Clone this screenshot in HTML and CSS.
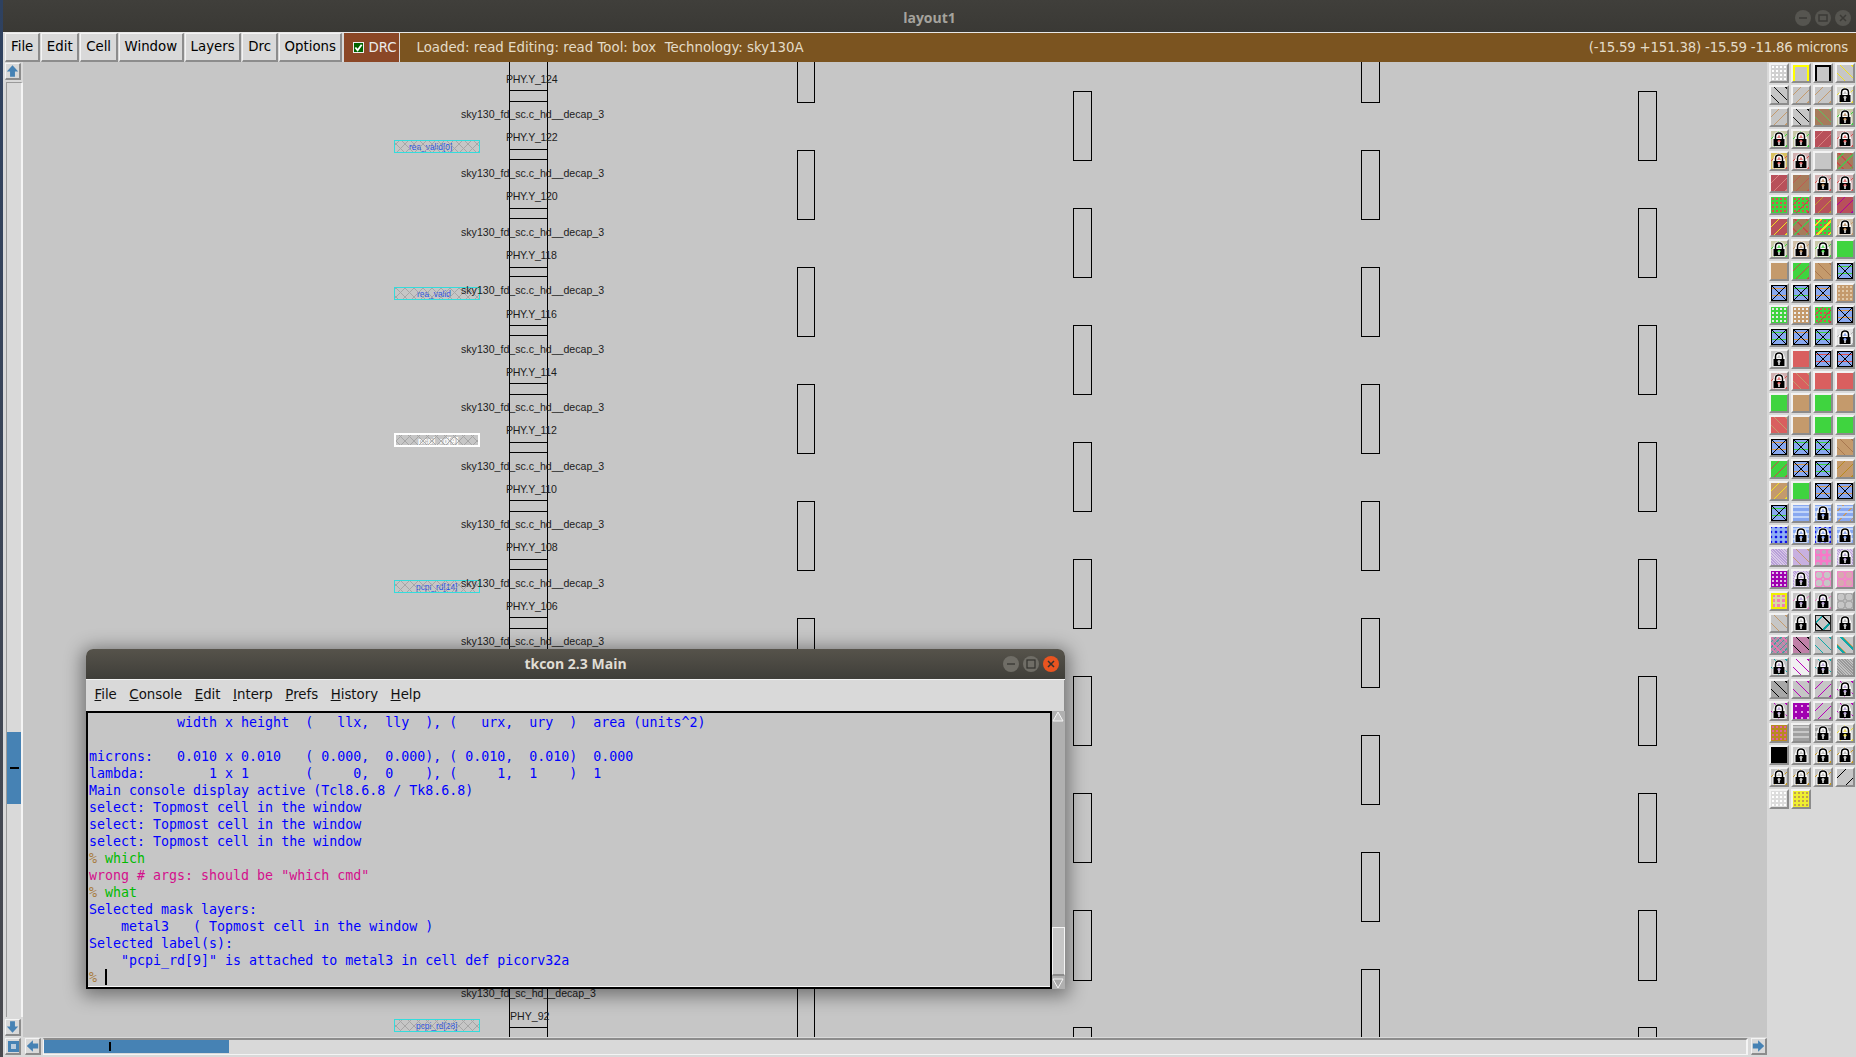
FILE: index.html
```html
<!DOCTYPE html>
<html lang="en">
<head>
<meta charset="utf-8">
<title>layout1</title>
<link rel="stylesheet" href="styles.css">
</head>
<body>
<svg class="defs" width="0" height="0" aria-hidden="true">
  <symbol id="lk" viewBox="0 0 16 16">
    <path d="M1.500 15.500V8L3 4Q4 0.500 8 0.500Q12 0.500 13 4L14.500 8V15.500Z" fill="#fff"/>
    <path d="M4.500 8V5.500Q4.500 2 8 2Q11.500 2 11.500 5.500V8" fill="none" stroke="#000" stroke-width="1.500"/>
    <path d="M6 7L8 3.500L10 7Z" fill="currentColor" opacity=".75"/>
    <rect x="2.500" y="8" width="11" height="7" fill="#000"/>
    <circle cx="8" cy="10.300" r="1.500" fill="currentColor"/>
    <rect x="7.300" y="10.500" width="1.400" height="3.500" fill="#eee"/>
  </symbol>
  <symbol id="arrow" viewBox="0 0 16 16">
    <path d="M8 1L15 8.500H11V15H5V8.500H1Z" fill="#4682b4"/>
  </symbol>
</svg>

<div class="window">
  <header class="titlebar">
    <span class="title">layout1</span>
    <div class="winbtns">
      <span class="wb"><svg viewBox="0 0 16 16"><path d="M4 8H12" stroke="#3b3a36" stroke-width="1.500"/></svg></span>
      <span class="wb"><svg viewBox="0 0 16 16"><rect x="4" y="5" width="8" height="6" fill="none" stroke="#3b3a36" stroke-width="1.500"/></svg></span>
      <span class="wb"><svg viewBox="0 0 16 16"><path d="M5 5L11 11M11 5L5 11" stroke="#3b3a36" stroke-width="1.500"/></svg></span>
    </div>
  </header>

  <nav class="toolbar">
    <span class="tbtn">File</span>
    <span class="tbtn">Edit</span>
    <span class="tbtn">Cell</span>
    <span class="tbtn">Window</span>
    <span class="tbtn">Layers</span>
    <span class="tbtn">Drc</span>
    <span class="tbtn">Options</span>
    <span class="drc"><span class="check"><svg viewBox="0 0 10 10"><path d="M1.500 5L4 8L8.500 2" fill="none" stroke="#fff" stroke-width="2"/></svg></span>DRC</span>
    <div class="status">
      <span class="status-left">Loaded: read Editing: read Tool: box&nbsp; Technology: sky130A</span>
      <span class="coords">(-15.59 +151.38) -15.59 -11.86 microns</span>
    </div>
  </nav>

  <div class="workspace">
    <div class="main">
      <div class="upper">
        <div class="vscroll">
          <span class="abtn"><svg><use href="#arrow"/></svg></span>
          <div class="vtrack">
            <div class="vthumb"><span class="vmark"></span></div>
          </div>
          <span class="abtn flip"><svg><use href="#arrow"/></svg></span>
        </div>
        <svg class="canvas" viewBox="23 62 1744 975" shape-rendering="crispEdges">
          <defs>
            <pattern id="xh" width="9" height="9" patternUnits="userSpaceOnUse">
              <path d="M0 0L9 9M9 0L0 9" stroke="#a6a6a6" stroke-width="1" fill="none" shape-rendering="auto"/>
            </pattern>
          </defs>
          <g class="cells">
            <rect x="797.500" y="33" width="17" height="69"/><rect x="797.500" y="150" width="17" height="69"/><rect x="797.500" y="267" width="17" height="69"/><rect x="797.500" y="384" width="17" height="69"/><rect x="797.500" y="501" width="17" height="69"/><rect x="797.500" y="618" width="17" height="69"/><rect x="797.500" y="969" width="17" height="69"/>
            <rect x="1073.500" y="91" width="18" height="69"/><rect x="1073.500" y="208" width="18" height="69"/><rect x="1073.500" y="325" width="18" height="69"/><rect x="1073.500" y="442" width="18" height="69"/><rect x="1073.500" y="559" width="18" height="69"/><rect x="1073.500" y="676" width="18" height="69"/><rect x="1073.500" y="793" width="18" height="69"/><rect x="1073.500" y="910" width="18" height="70"/><rect x="1073.500" y="1027" width="18" height="69"/>
            <rect x="1361.500" y="33" width="18" height="69"/><rect x="1361.500" y="150" width="18" height="69"/><rect x="1361.500" y="267" width="18" height="69"/><rect x="1361.500" y="384" width="18" height="69"/><rect x="1361.500" y="501" width="18" height="69"/><rect x="1361.500" y="618" width="18" height="69"/><rect x="1361.500" y="735" width="18" height="69"/><rect x="1361.500" y="852" width="18" height="69"/><rect x="1361.500" y="969" width="18" height="69"/>
            <rect x="1638.500" y="91" width="18" height="69"/><rect x="1638.500" y="208" width="18" height="69"/><rect x="1638.500" y="325" width="18" height="69"/><rect x="1638.500" y="442" width="18" height="69"/><rect x="1638.500" y="559" width="18" height="69"/><rect x="1638.500" y="676" width="18" height="69"/><rect x="1638.500" y="793" width="18" height="69"/><rect x="1638.500" y="910" width="18" height="70"/><rect x="1638.500" y="1027" width="18" height="69"/>
          </g>
          <path class="stack" d="M509.500 62V1037M547.500 62V1037M510 90.500H547M510 101.500H547M510 149.500H547M510 159.500H547M510 208.500H547M510 218.500H547M510 267.500H547M510 276.500H547M510 325.500H547M510 335.500H547M510 383.500H547M510 394.500H547M510 442.500H547M510 452.500H547M510 500.500H547M510 511.500H547M510 559.500H547M510 569.500H547M510 617.500H547M510 628.500H547M510 1027.500H547"/>
          <g class="pin cyan">
            <rect class="pinbox" x="394.500" y="140.500" width="85" height="12"/>
            <text x="409" y="150">rea_valid[0]</text>
            <rect class="pinhatch" x="395" y="141" width="84" height="11"/>
          </g>
          <g class="pin cyan">
            <rect class="pinbox" x="394.500" y="287.500" width="85" height="12"/>
            <text x="417" y="297">rea_valid</text>
            <rect class="pinhatch" x="395" y="288" width="84" height="11"/>
          </g>
          <g class="pin picked">
            <rect class="pinbox" x="395" y="434" width="84" height="12"/>
            <text x="418" y="444">pcpi_rd[9]</text>
            <rect class="pinhatch" x="396" y="435" width="82" height="10"/>
          </g>
          <g class="pin cyan">
            <rect class="pinbox" x="394.500" y="580.500" width="85" height="12"/>
            <text x="416" y="590">pcpi_rd[14]</text>
            <rect class="pinhatch" x="395" y="581" width="84" height="11"/>
          </g>
          <g class="pin cyan">
            <rect class="pinbox" x="394.500" y="1019.500" width="85" height="12"/>
            <text x="416" y="1029">pcpi_rd[28]</text>
            <rect class="pinhatch" x="395" y="1020" width="84" height="11"/>
          </g>
          <g class="cell-labels">
            <text class="phy" x="506" y="83">PHY.Y_124</text>
            <text x="461" y="118">sky130_fd_sc.c_hd__decap_3</text>
            <text class="phy" x="506" y="141">PHY.Y_122</text>
            <text x="461" y="177">sky130_fd_sc.c_hd__decap_3</text>
            <text class="phy" x="506" y="200">PHY.Y_120</text>
            <text x="461" y="236">sky130_fd_sc.c_hd__decap_3</text>
            <text class="phy" x="506" y="259">PHY.Y_118</text>
            <text x="461" y="294">sky130_fd_sc.c_hd__decap_3</text>
            <text class="phy" x="506" y="318">PHY.Y_116</text>
            <text x="461" y="353">sky130_fd_sc.c_hd__decap_3</text>
            <text class="phy" x="506" y="376">PHY.Y_114</text>
            <text x="461" y="411">sky130_fd_sc.c_hd__decap_3</text>
            <text class="phy" x="506" y="434">PHY.Y_112</text>
            <text x="461" y="470">sky130_fd_sc.c_hd__decap_3</text>
            <text class="phy" x="506" y="493">PHY.Y_110</text>
            <text x="461" y="528">sky130_fd_sc.c_hd__decap_3</text>
            <text class="phy" x="506" y="551">PHY.Y_108</text>
            <text x="461" y="587">sky130_fd_sc.c_hd__decap_3</text>
            <text class="phy" x="506" y="610">PHY.Y_106</text>
            <text x="461" y="645">sky130_fd_sc.c_hd__decap_3</text>
            <text x="461" y="997">sky130_fd_sc_hd__decap_3</text>
            <text x="510" y="1020">PHY_92</text>
          </g>
        </svg>
      </div>
      <div class="hscroll">
        <span class="abtn corner"><span class="corner-in"></span></span>
        <span class="abtn left"><svg><use href="#arrow"/></svg></span>
        <div class="htrack">
          <div class="hthumb"><span class="hmark"></span></div>
        </div>
        <span class="abtn right"><svg><use href="#arrow"/></svg></span>
      </div>
    </div>

    <aside class="layers">
      <span class="ly dw"></span><span class="ly fy"></span><span class="ly fk"></span><span class="ly dy"></span>
      <span class="ly dk"></span><span class="ly dt"></span><span class="ly dt"></span><span class="ly sy kw"><svg><use href="#lk"/></svg></span>
      <span class="ly dt"></span><span class="ly dk"></span><span class="ly bg"></span><span class="ly sg kt"><svg><use href="#lk"/></svg></span>
      <span class="ly sg kr"><svg><use href="#lk"/></svg></span><span class="ly sg kr"><svg><use href="#lk"/></svg></span><span class="ly mp"></span><span class="ly sr kr"><svg><use href="#lk"/></svg></span>
      <span class="ly sry kr"><svg><use href="#lk"/></svg></span><span class="ly sr kr"><svg><use href="#lk"/></svg></span><span class="ly"></span><span class="ly bgc"></span>
      <span class="ly mp"></span><span class="ly br"></span><span class="ly sr kt"><svg><use href="#lk"/></svg></span><span class="ly sr kr"><svg><use href="#lk"/></svg></span>
      <span class="ly gr"></span><span class="ly grd"></span><span class="ly mo"></span><span class="ly mm"></span>
      <span class="ly my"></span><span class="ly bgc"></span><span class="ly gry"></span><span class="ly st kt"><svg><use href="#lk"/></svg></span>
      <span class="ly sg kg"><svg><use href="#lk"/></svg></span><span class="ly st kt"><svg><use href="#lk"/></svg></span><span class="ly sg kg"><svg><use href="#lk"/></svg></span><span class="ly green"></span>
      <span class="ly tan"></span><span class="ly gd2"></span><span class="ly tbr"></span><span class="ly x xg"></span>
      <span class="ly x xo"></span><span class="ly x xg"></span><span class="ly x xo"></span><span class="ly tw2"></span>
      <span class="ly gw"></span><span class="ly tw"></span><span class="ly grd"></span><span class="ly x xo"></span>
      <span class="ly x xg"></span><span class="ly x xo"></span><span class="ly x xg"></span><span class="ly ks kb"><svg><use href="#lk"/></svg></span>
      <span class="ly kw"><svg><use href="#lk"/></svg></span><span class="ly red"></span><span class="ly x xr"></span><span class="ly x xr"></span>
      <span class="ly sr kr"><svg><use href="#lk"/></svg></span><span class="ly rt"></span><span class="ly red"></span><span class="ly red"></span>
      <span class="ly green"></span><span class="ly tan"></span><span class="ly green"></span><span class="ly tan"></span>
      <span class="ly rt"></span><span class="ly tan"></span><span class="ly green"></span><span class="ly green"></span>
      <span class="ly x xo"></span><span class="ly x xg"></span><span class="ly x xg"></span><span class="ly tbr"></span>
      <span class="ly gd2"></span><span class="ly x xo"></span><span class="ly x xg"></span><span class="ly to"></span>
      <span class="ly ty"></span><span class="ly green"></span><span class="ly x xo"></span><span class="ly x xo"></span>
      <span class="ly x xg"></span><span class="ly wv"></span><span class="ly wv kb"><svg><use href="#lk"/></svg></span><span class="ly wt"></span>
      <span class="ly bd"></span><span class="ly wv kb"><svg><use href="#lk"/></svg></span><span class="ly bd kb"><svg><use href="#lk"/></svg></span><span class="ly wv kb"><svg><use href="#lk"/></svg></span>
      <span class="ly li"></span><span class="ly lt"></span><span class="ly pk"></span><span class="ly li kl"><svg><use href="#lk"/></svg></span>
      <span class="ly pu"></span><span class="ly li kl"><svg><use href="#lk"/></svg></span><span class="ly rg"></span><span class="ly rt2"></span>
      <span class="ly yf"></span><span class="ly sp kl"><svg><use href="#lk"/></svg></span><span class="ly sp kl"><svg><use href="#lk"/></svg></span><span class="ly grg"></span>
      <span class="ly gt"></span><span class="ly kw"><svg><use href="#lk"/></svg></span><span class="ly xt"></span><span class="ly kw"><svg><use href="#lk"/></svg></span>
      <span class="ly mt"></span><span class="ly mk"></span><span class="ly tl"></span><span class="ly tlo"></span>
      <span class="ly stl kl"><svg><use href="#lk"/></svg></span><span class="ly wm"></span><span class="ly stl kl"><svg><use href="#lk"/></svg></span><span class="ly gdn"></span>
      <span class="ly gdk"></span><span class="ly md"></span><span class="ly mo2"></span><span class="ly sm kl"><svg><use href="#lk"/></svg></span>
      <span class="ly sm kl"><svg><use href="#lk"/></svg></span><span class="ly pd"></span><span class="ly mm2"></span><span class="ly sm kl"><svg><use href="#lk"/></svg></span>
      <span class="ly gl"></span><span class="ly bk"></span><span class="ly bk kw"><svg><use href="#lk"/></svg></span><span class="ly sy ky"><svg><use href="#lk"/></svg></span>
      <span class="ly black"></span><span class="ly kw"><svg><use href="#lk"/></svg></span><span class="ly sgo kw"><svg><use href="#lk"/></svg></span><span class="ly sgo kw"><svg><use href="#lk"/></svg></span>
      <span class="ly sgo kw"><svg><use href="#lk"/></svg></span><span class="ly sgo kw"><svg><use href="#lk"/></svg></span><span class="ly sgo kw"><svg><use href="#lk"/></svg></span><span class="ly thin"></span>
      <span class="ly wd"></span><span class="ly yd"></span>
    </aside>
  </div>
</div>

<section class="tkcon">
  <header class="tk-title">
    <span class="tk-name">tkcon 2.3 Main</span>
    <div class="tk-btns">
      <span class="tkb"><svg viewBox="0 0 16 16"><path d="M4 8H12" stroke="#33322e" stroke-width="1.200"/></svg></span>
      <span class="tkb"><svg viewBox="0 0 16 16"><rect x="4" y="4" width="8" height="8" fill="none" stroke="#33322e" stroke-width="1.200"/></svg></span>
      <span class="tkb close"><svg viewBox="0 0 16 16"><path d="M5 5L11 11M11 5L5 11" stroke="#33322e" stroke-width="1.500"/></svg></span>
    </div>
  </header>
  <nav class="tk-menu">
    <span><u>F</u>ile</span>
    <span><u>C</u>onsole</span>
    <span><u>E</u>dit</span>
    <span><u>I</u>nterp</span>
    <span><u>P</u>refs</span>
    <span><u>H</u>istory</span>
    <span><u>H</u>elp</span>
  </nav>
  <div class="tk-body">
    <div class="console">
<pre class="out">           width x height  (   llx,  lly  ), (   urx,  ury  )  area (units^2)

microns:   0.010 x 0.010   ( 0.000,  0.000), ( 0.010,  0.010)  0.000
lambda:        1 x 1       (     0,  0    ), (     1,  1    )  1
Main console display active (Tcl8.6.8 / Tk8.6.8)
select: Topmost cell in the window
select: Topmost cell in the window
select: Topmost cell in the window
<span class="prompt">% </span><span class="stdin">which</span>
<span class="stderr">wrong # args: should be "which cmd"</span>
<span class="prompt">% </span><span class="stdin">what</span>
Selected mask layers:
    metal3   ( Topmost cell in the window )
Selected label(s):
    "pcpi_rd[9]" is attached to metal3 in cell def picorv32a
<span class="prompt">% </span><span class="cursor"></span></pre>
    </div>
    <div class="tk-scroll">
      <svg class="tri" viewBox="0 0 12 11"><path d="M6 1L11 10H1Z" fill="#c6c6c6" stroke="#f4f4f4"/></svg>
      <div class="tk-trough"><div class="tk-thumb"></div></div>
      <svg class="tri" viewBox="0 0 12 11"><path d="M1 1H11L6 10Z" fill="#a8a8a8" stroke="#f4f4f4"/></svg>
    </div>
  </div>
</section>
</body>
</html>
```
FILE: styles.css
```css
* { box-sizing: border-box; }
html, body { margin: 0; padding: 0; }
body {
  width: 1856px;
  height: 1057px;
  overflow: hidden;
  position: relative;
  background: linear-gradient(#2e4160, #4a4a4e);
  font-family: "DejaVu Sans", sans-serif;
  font-size: 13.33px;
}
.defs { position: absolute; }

.window {
  margin-left: 3px;
  height: 1057px;
  display: flex;
  flex-direction: column;
  background: #d9d9d9;
}
.titlebar {
  height: 33px;
  flex: none;
  background: linear-gradient(#403f3b, #3a3935);
  border-bottom: 1px solid #e8e8e8;
  display: flex;
  align-items: center;
  justify-content: center;
  position: relative;
  padding-top: 2px;
}
.title {
  font: bold 14px "Open Sans", sans-serif;
  color: #a5a39d;
}
.winbtns {
  position: absolute;
  right: 5px;
  top: 10px;
  display: flex;
  gap: 4px;
}
.wb {
  width: 16px;
  height: 16px;
  border-radius: 50%;
  background: #565550;
  display: block;
}
.wb svg, .tkb svg { display: block; width: 16px; height: 16px; }

.toolbar {
  height: 29px;
  flex: none;
  display: flex;
  gap: 1px;
  padding-left: 2px;
  background: #d9d9d9;
}
.tbtn {
  height: 29px;
  display: flex;
  align-items: center;
  padding: 0 4.500px 1px 5px;
  color: #000;
  border: 1px solid;
  border-color: #f4f4f4 #8c8c8c #8c8c8c #f4f4f4;
  border-width: 1px 2px 2px 1px;
}
.drc {
  height: 29px;
  width: 57px;
  display: flex;
  align-items: center;
  gap: 4px;
  padding: 0 0 1px 9px;
  background: #8b4726;
  color: #ececec;
  border: 1px solid #d9d9d9;
  border-width: 0 1px 0 1px;
}
.check {
  width: 11px;
  height: 11px;
  background: #006400;
  border: 1px solid #eee;
  display: block;
}
.check svg { display: block; width: 9px; height: 9px; }
.status {
  flex: 1;
  display: flex;
  justify-content: space-between;
  align-items: center;
  background: #7b5420;
  color: #e4dcc8;
  padding: 0 8px 1px 16px;
  margin-left: -1px;
}
.status-left { white-space: pre; }
.coords { letter-spacing: -.2px; }

.workspace { flex: 1; display: flex; min-height: 0; }
.main { flex: 1; display: flex; flex-direction: column; min-width: 0; }
.upper { flex: 1; display: flex; min-height: 0; }

.vscroll {
  width: 20px;
  flex: none;
  display: flex;
  flex-direction: column;
  padding: 1px 0 1px 2px;
  gap: 2px;
  background: #d9d9d9;
}
.abtn {
  display: block;
  width: 16px;
  height: 17px;
  flex: none;
  border: 1px solid;
  border-color: #f4f4f4 #8c8c8c #8c8c8c #f4f4f4;
  border-width: 1px 2px 2px 1px;
}
.abtn svg { display: block; width: 13px; height: 14px; }
.flip svg { transform: rotate(180deg); }
.vtrack {
  flex: 1;
  border-left: 1px solid #9a9a9a;
  border-top: 1px solid #9a9a9a;
  border-right: 2px solid #f4f4f4;
  margin-left: 1px;
  position: relative;
  padding-top: 649px;
}
.vthumb {
  height: 72px;
  background: #4682b4;
  display: flex;
  align-items: center;
  justify-content: center;
}
.vmark { width: 9px; height: 2px; background: #000; display: block; }
.canvas { flex: 1; min-width: 0; height: 100%; display: block; background: #c6c6c6; }

.cells rect { fill: none; stroke: #000; stroke-width: 1; }
.stack { fill: none; stroke: #000; stroke-width: 1; }
.pinbox { fill: url(#xh); }
.pinhatch { fill: url(#xh); opacity: .9; }
.pin text { font: 8.4px "Liberation Sans", sans-serif; }
.cyan .pinbox { stroke: #33dcdc; stroke-width: 1; }
.cyan text { fill: #1f4fe0; }
.picked .pinbox { stroke: #fff; stroke-width: 2; }
.picked text { fill: #fff; font-weight: bold; }
.cell-labels text {
  font: 10.6px "Liberation Sans", sans-serif;
  fill: #1c1c1c;
}
.cell-labels .phy { letter-spacing: -.3px; }

.hscroll {
  height: 20px;
  flex: none;
  display: flex;
  gap: 2px;
  padding: 1px 0 0 2px;
  background: #d9d9d9;
  align-items: flex-start;
}
.corner { padding: 2px; margin-right: 2px; }
.corner-in {
  display: block;
  width: 11px;
  height: 11px;
  border: 3px solid #4682b4;
  background: #bcd;
}
.left svg { transform: rotate(-90deg); }
.right { margin-left: 1px; }
.right svg { transform: rotate(90deg); }
.htrack {
  flex: 1;
  height: 17px;
  border-top: 2px solid #8c8c8c;
  border-left: 1px solid #f4f4f4;
  border-right: 2px solid #f4f4f4;
  border-bottom: 1px solid #f4f4f4;
}
.hthumb {
  width: 185px;
  height: 13px;
  background: #4682b4;
  display: flex;
  align-items: center;
  padding-left: 65px;
}
.hmark { width: 2px; height: 9px; background: #000; display: block; }

.layers {
  width: 89px;
  flex: none;
  padding: 1px 0 0 2px;
  display: grid;
  grid-template-columns: repeat(4, 20px);
  grid-auto-rows: 20px;
  gap: 2px;
  align-content: start;
}
.ly {
  --h: repeating-linear-gradient(var(--a, 135deg), transparent 0 5px, var(--c, #000) 5px 6px, transparent 6px 8px);
  --d: radial-gradient(circle, var(--c, #fff) 0 1.400px, transparent 1.500px);
  display: block;
  width: 20px;
  height: 20px;
  border: 2px solid;
  border-color: #f2f2f2 #8c8c8c #8c8c8c #f2f2f2;
  background-color: var(--b, #c6c6c6);
  background-size: var(--s, auto);
  overflow: hidden;
}
.ly svg { display: block; width: 16px; height: 16px; }

.dy,.dk,.dt,.bg,.mp,.br,.mo,.mm,.my,.tbr,.gd2,.to,.ty,.rt,.lt,.gt,.tl,.tlo,.thin,.wm,.md,.mo2,.mm2,.mk,.gdk,.sy,.sg,.sr,.sry,.st,.ks,.sm,.sgo,.sp,.stl { background-image: var(--h); }
.dw,.gr,.gw,.tw,.pu,.wd,.yd,.tw2 { background-image: var(--d); --s: 4px 4px; }

.dw { --b: #d0d0d0; --c: #fff; }
.wd { --b: #dcdcdc; --c: #fff; }
.yd { --b: #efef30; --c: #c0a050; }
.fy { box-shadow: inset 0 2px #ff0, inset 2px 0 #ff0, inset -2px 0 #ff0; }
.fk { box-shadow: inset 0 2px #000, inset 2px 0 #000, inset -2px 0 #000; }
.dy { --a: 45deg; --c: #f0e020; }
.dk { --a: 45deg; --c: #111; }
.dt { --c: #c49a6c; }
.bg { --b: #a67b5b; --c: #5fc060; --a: 45deg; }
.bgc { --b: #a67b5b; background-image: repeating-linear-gradient(135deg, transparent 0 4px, #50c050 4px 5px, transparent 5px 8px), repeating-linear-gradient(45deg, transparent 0 4px, #c84a4a 4px 5px, transparent 5px 8px); }
.mp { --b: #b8505a; --c: #d88080; }
.br { --b: #a67b5b; --c: #c05a50; }
.mo { --b: #b8505a; --c: #c49a30; }
.mm { --b: #b8505a; --c: #b000a0; }
.my { --b: #b8505a; --c: #f0e020; }
.gr { --b: #3fd43f; --c: #d85050; }
.gw { --b: #3fd43f; --c: #e8e8e8; }
.tw { --b: #c49a6c; --c: #eee; }
.tw2 { --b: #c49a6c; --c: #e0c8a8; }
.grd { --b: #3fd43f; background-image: radial-gradient(circle, #d85050 0 1.200px, transparent 1.300px), repeating-linear-gradient(135deg, transparent 0 5px, #c04040 5px 6px, transparent 6px 8px); background-size: 4px 4px, auto; }
.gry { --b: #3fd43f; background-image: repeating-linear-gradient(135deg, transparent 0 4px, #f0e020 4px 5.500px, transparent 5.500px 8px), radial-gradient(circle, #d85050 0 1.200px, transparent 1.300px); background-size: auto, 4px 4px; }
.gd2 { --b: #3fd43f; --c: #c84a4a; }
.tbr { --b: #c49a6c; --c: #a87850; --a: 45deg; }
.to { --b: #c49a6c; --c: #b88a20; }
.ty { --b: #c49a6c; --c: #f0e020; }
.rt { --b: #d95f5f; --c: #c49a6c; --a: 45deg; }
.green { --b: #3fd43f; }
.tan { --b: #c49a6c; }
.red { --b: #d95f5f; }
.black { --b: #000; }
.x {
  --b: #88a8f0;
  background-image:
    linear-gradient(45deg, transparent 47.500%, #000 47.500% 52.500%, transparent 52.500%),
    linear-gradient(135deg, transparent 47.500%, #000 47.500% 52.500%, transparent 52.500%),
    repeating-linear-gradient(0deg, transparent 0 5px, var(--c) 5px 6px, transparent 6px 7px);
  box-shadow: inset 0 0 0 1px #000;
}
.xg { --c: #3fd43f; }
.xo { --c: #d89a50; }
.xr { --c: #e05050; }
.wv, .wt {
  --b: #88a8f0;
  background-image: repeating-linear-gradient(0deg, transparent 0 3px, #c0d4f8 3px 5px);
}
.wt { background-image: repeating-linear-gradient(0deg, transparent 0 3px, #c0d4f8 3px 5px), repeating-linear-gradient(135deg, transparent 0 4px, #c49a6c 4px 5px, transparent 5px 8px); }
.bd {
  --b: #1010e8;
  background-image: radial-gradient(circle, #90b0f4 0 2.200px, transparent 2.400px);
  background-size: 5px 5px;
}
.li {
  --b: #c8b0e0;
  background-image: repeating-linear-gradient(45deg, #b8a0d8 0 1px, #d8c8e8 1px 2px);
}
.lt { --b: #c8b0e0; --a: 45deg; --c: #c49a6c; }
.pk {
  --b: #f878c8;
  background-image: radial-gradient(circle, #c0a8c0 0 2px, transparent 2.200px);
  background-size: 6px 6px;
}
.pu,.pd { --b: #a000b0; --c: #e0c0e8; }
.pd { background-image: radial-gradient(circle, #e8a0e8 0 1px, transparent 1.200px); background-size: 6px 6px; }
.rg, .rt2, .grg {
  --b: #c6c6c6;
  background-image: radial-gradient(circle, transparent 0 3px, var(--c, #f088c8) 3px 4.800px, transparent 5px);
  background-size: 8px 8px;
}
.rt2 { --b: #d8a8b0; }
.grg { --c: #aaa; }
.yf { --b: #d8d8a8; background-image: radial-gradient(circle, #f080b0 0 1.500px, transparent 1.700px); background-size: 5px 5px; box-shadow: inset 0 0 0 2px #f0f000; }
.sp { --c: #e878c0; --a: 135deg; }
.gt { --c: #c49a6c; --a: 45deg; }
.xt { background-image: repeating-linear-gradient(45deg, transparent 0 5px, #000 5px 6.500px, transparent 6.500px 10px), repeating-linear-gradient(135deg, transparent 0 5px, #10a0a0 5px 7px, transparent 7px 10px); box-shadow: inset 0 0 0 1px #222; }
.mt { --b: #b090a8; background-image: repeating-linear-gradient(45deg, transparent 0 3px, #f070b0 3px 4px), repeating-linear-gradient(135deg, transparent 0 3px, #40a0a0 3px 4px); }
.mk { --b: #c080a8; --c: #000; --a: 45deg; }
.tl { --a: 45deg; --c: #10a8a8; }
.tlo { --b: #c6c6c6; background-image: repeating-linear-gradient(45deg, transparent 0 4px, #10a8a8 4px 6px, #d89a50 6px 7px, transparent 7px 9px); }
.wm { --b: #f0f0f0; --c: #b800b8; --a: 45deg; }
.gdn { background-image: repeating-linear-gradient(45deg, #999 0 1px, #c0c0c0 1px 2px); }
.gdk { --b: #a8a8a8; --c: #000; --a: 45deg; }
.md { --c: #b800b8; --a: 45deg; }
.mo2 { --c: #b800b8; --a: 135deg; }
.mm2 { --c: #b800b8; --a: 135deg; }
.gl { --b: #b88a20; background-image: radial-gradient(circle, #e060a0 0 1.200px, transparent 1.400px); background-size: 4px 4px; }
.bk { --b: #a0a0a0; background-image: repeating-linear-gradient(0deg, transparent 0 3px, #c8c8c8 3px 5px); }
.thin { --c: #000; --h: repeating-linear-gradient(135deg, transparent 0 6px, #000 6px 7px, transparent 7px 11px); }

.sy { --b: #d6d6d0; --c: #e8d830; }
.sg { --b: #c8c8a8; --c: #3fd43f; }
.sr { --b: #d0b0b0; --c: #d85050; }
.sry { --b: #d8c060; --c: #d85050; }
.st { --b: #d0c0a8; --c: #c49a6c; }
.ks { --b: #e0e0e0; --c: #b0b0b0; }
.sm { --c: #b800b8; --a: 45deg; }
.sgo { --c: #c89a20; --a: 135deg; }
.stl { --c: #10a8a8; --a: 45deg; }
.kw { color: #b0b0b0; }
.kt { color: #b08050; }
.kr { color: #d85050; }
.kg { color: #3fd43f; }
.kb { color: #7090e8; }
.kl { color: #a890c8; }
.ky { color: #e8d830; }

.tkcon {
  position: absolute;
  left: 86px;
  top: 649px;
  width: 979px;
  height: 340px;
  display: flex;
  flex-direction: column;
  border-radius: 7px 7px 0 0;
  box-shadow: 0 3px 18px 4px rgba(0,0,0,.42);
  background: #d9d9d9;
}
.tk-title {
  height: 31px;
  flex: none;
  background: linear-gradient(#56534b, #3f3e39);
  border-radius: 7px 7px 0 0;
  border-bottom: 1px solid #f2f2f2;
  display: flex;
  align-items: center;
  justify-content: center;
  position: relative;
  padding-bottom: 2px;
}
.tk-name { font: bold 14px "Open Sans", sans-serif; color: #e0ddd5; }
.tk-btns { position: absolute; right: 6px; top: 7px; display: flex; gap: 4px; }
.tkb {
  width: 16px;
  height: 16px;
  border-radius: 50%;
  background: #6f6d66;
  display: block;
}
.tkb.close { background: #e95420; }
.tk-menu {
  height: 31px;
  flex: none;
  display: flex;
  align-items: center;
  gap: 12.500px;
  padding: 0 0 2px 8.500px;
  color: #111;
  border-right: 1px solid #8c8c8c;
}
.tk-body { flex: 1; display: flex; min-height: 0; }
.console {
  flex: 1;
  min-width: 0;
  background: #c6c6c6;
  border: 2px solid #000;
  box-shadow: inset 0 -1px #f4f4f4;
  overflow: hidden;
}
.out {
  margin: 0;
  padding: 1px 0 0 1px;
  font: 13.3px/17px "DejaVu Sans Mono", monospace;
  color: #0000ff;
}
.prompt { color: #a87c40; }
.stdin { color: #00bb00; }
.stderr { color: #d4108c; }
.cursor {
  display: inline-block;
  width: 2px;
  height: 16px;
  background: #000;
  vertical-align: top;
}
.tk-scroll {
  width: 13px;
  flex: none;
  display: flex;
  flex-direction: column;
  background: #b0b0b0;
}
.tri { display: block; width: 12px; height: 11px; flex: none; }
.tk-trough { flex: 1; padding-top: 205px; }
.tk-thumb {
  height: 49px;
  background: #c6c6c6;
  border: 1px solid;
  border-color: #f4f4f4 #f4f4f4 #8c8c8c #f4f4f4;
  border-bottom-width: 2px;
}
```
